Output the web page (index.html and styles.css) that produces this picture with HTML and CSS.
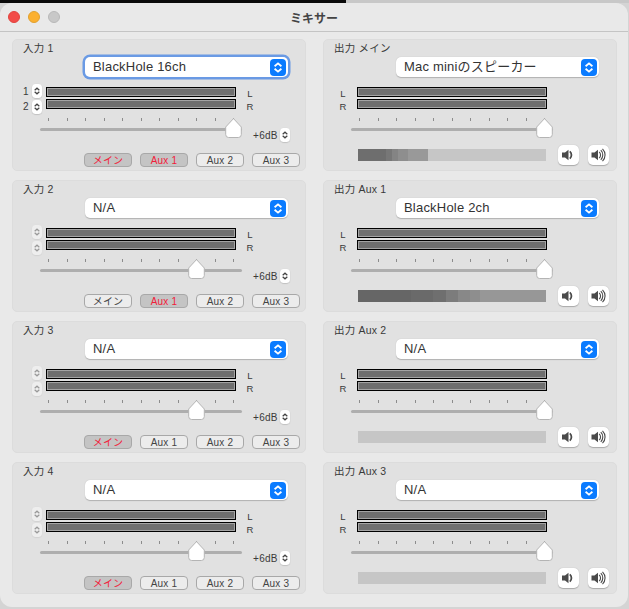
FILE: index.html
```html
<!DOCTYPE html>
<html lang="ja">
<head>
<meta charset="utf-8">
<title>ミキサー</title>
<link rel="stylesheet" href="styles.css">
</head>
<body>
<svg class="defs" width="0" height="0" aria-hidden="true">
  <symbol id="updown" viewBox="0 0 12 14"><path d="M3.2 6 6 3.6 8.800 6M3.200 8 6 10.400 8.800 8" fill="none" stroke="currentColor" stroke-width="1.500"/></symbol>
  <symbol id="thumb" viewBox="0 0 17 20"><path d="M8.500.6 16.300 9V16.500a3 3 0 0 1-3 3H3.700a3 3 0 0 1-3-3V9Z" fill="#fff" stroke="#b4b4b4"/></symbol>
  <symbol id="spk" viewBox="0 0 21 20"><path d="M4 7.500H7L10.500 4.800V15.200L7 12.500H4Z" fill="#4a4a4a"/><path d="M11.800 6.300a5 5 0 0 1 0 7.400" fill="none" stroke="#4a4a4a" stroke-width="1.800"/></symbol>
  <symbol id="spk-loud" viewBox="0 0 21 20"><path d="M3.500 7.500H6.500L10 4.800V15.200L6.500 12.500H3.500Z" fill="#4a4a4a"/><path d="M11.200 6.800a4.500 4.500 0 0 1 0 6.400M12.800 5.200a6.800 6.800 0 0 1 0 9.600M14.500 3.800a8.800 8.800 0 0 1 0 12.400" fill="none" stroke="#4a4a4a" stroke-width="1.100"/></symbol>
</svg>
<div class="screen-strip"></div>
<main class="window">
  <header class="titlebar">
    <div class="lights"><span class="light red"></span><span class="light amber"></span><span class="light off"></span></div>
    <h1 class="title">ミキサー</h1>
  </header>
  <div class="grid">

    <section class="panel">
      <div class="label">入力 1</div>
      <div class="select focus"><span class="select-text">BlackHole 16ch</span><span class="select-btn"><svg width="17" height="17"><use href="#updown"/></svg></span></div>
      <div class="meters">
        <div class="nums"><span>1</span><span>2</span></div>
        <div class="steppers"><span class="stepper"><svg width="10" height="14"><use href="#updown"/></svg></span><span class="stepper"><svg width="10" height="14"><use href="#updown"/></svg></span></div>
        <div class="bars"><div class="meter"></div><div class="meter"></div></div>
        <div class="lr"><span>L</span><span>R</span></div>
      </div>
      <div class="fader-row">
        <div class="fader"><div class="ticks"><i></i><i></i><i></i><i></i><i></i><i></i><i></i><i></i><i></i><i></i><i></i></div><div class="track"></div><svg class="thumb" style="left:185px" width="17" height="20"><use href="#thumb"/></svg></div>
        <span class="db">+6dB</span><span class="stepper db-step"><svg width="10" height="14"><use href="#updown"/></svg></span>
      </div>
      <div class="routes"><span class="route on">メイン</span><span class="route on">Aux 1</span><span class="route">Aux 2</span><span class="route">Aux 3</span></div>
    </section>

    <section class="panel">
      <div class="label">出力 メイン</div>
      <div class="select"><span class="select-text">Mac miniのスピーカー</span><span class="select-btn"><svg width="17" height="17"><use href="#updown"/></svg></span></div>
      <div class="meters out">
        <div class="lr"><span>L</span><span>R</span></div>
        <div class="bars"><div class="meter"></div><div class="meter"></div></div>
      </div>
      <div class="fader-row">
        <div class="fader"><div class="ticks"><i></i><i></i><i></i><i></i><i></i><i></i><i></i><i></i><i></i><i></i><i></i></div><div class="track"></div><svg class="thumb" style="left:185px" width="17" height="20"><use href="#thumb"/></svg></div>
      </div>
      <div class="volume"><div class="level level-main"></div><span class="vol-btn"><svg width="21" height="20"><use href="#spk"/></svg></span><span class="vol-btn"><svg width="21" height="20"><use href="#spk-loud"/></svg></span></div>
    </section>

    <section class="panel">
      <div class="label">入力 2</div>
      <div class="select"><span class="select-text">N/A</span><span class="select-btn"><svg width="17" height="17"><use href="#updown"/></svg></span></div>
      <div class="meters">
        <div class="nums"></div>
        <div class="steppers dim"><span class="stepper"><svg width="10" height="14"><use href="#updown"/></svg></span><span class="stepper"><svg width="10" height="14"><use href="#updown"/></svg></span></div>
        <div class="bars"><div class="meter"></div><div class="meter"></div></div>
        <div class="lr"><span>L</span><span>R</span></div>
      </div>
      <div class="fader-row">
        <div class="fader"><div class="ticks"><i></i><i></i><i></i><i></i><i></i><i></i><i></i><i></i><i></i><i></i><i></i></div><div class="track"></div><svg class="thumb" style="left:148px" width="17" height="20"><use href="#thumb"/></svg></div>
        <span class="db">+6dB</span><span class="stepper db-step"><svg width="10" height="14"><use href="#updown"/></svg></span>
      </div>
      <div class="routes"><span class="route">メイン</span><span class="route on">Aux 1</span><span class="route">Aux 2</span><span class="route">Aux 3</span></div>
    </section>

    <section class="panel">
      <div class="label">出力 Aux 1</div>
      <div class="select"><span class="select-text">BlackHole 2ch</span><span class="select-btn"><svg width="17" height="17"><use href="#updown"/></svg></span></div>
      <div class="meters out">
        <div class="lr"><span>L</span><span>R</span></div>
        <div class="bars"><div class="meter"></div><div class="meter"></div></div>
      </div>
      <div class="fader-row">
        <div class="fader"><div class="ticks"><i></i><i></i><i></i><i></i><i></i><i></i><i></i><i></i><i></i><i></i><i></i></div><div class="track"></div><svg class="thumb" style="left:185px" width="17" height="20"><use href="#thumb"/></svg></div>
      </div>
      <div class="volume"><div class="level level-aux"></div><span class="vol-btn"><svg width="21" height="20"><use href="#spk"/></svg></span><span class="vol-btn"><svg width="21" height="20"><use href="#spk-loud"/></svg></span></div>
    </section>

    <section class="panel">
      <div class="label">入力 3</div>
      <div class="select"><span class="select-text">N/A</span><span class="select-btn"><svg width="17" height="17"><use href="#updown"/></svg></span></div>
      <div class="meters">
        <div class="nums"></div>
        <div class="steppers dim"><span class="stepper"><svg width="10" height="14"><use href="#updown"/></svg></span><span class="stepper"><svg width="10" height="14"><use href="#updown"/></svg></span></div>
        <div class="bars"><div class="meter"></div><div class="meter"></div></div>
        <div class="lr"><span>L</span><span>R</span></div>
      </div>
      <div class="fader-row">
        <div class="fader"><div class="ticks"><i></i><i></i><i></i><i></i><i></i><i></i><i></i><i></i><i></i><i></i><i></i></div><div class="track"></div><svg class="thumb" style="left:148px" width="17" height="20"><use href="#thumb"/></svg></div>
        <span class="db">+6dB</span><span class="stepper db-step"><svg width="10" height="14"><use href="#updown"/></svg></span>
      </div>
      <div class="routes"><span class="route on">メイン</span><span class="route">Aux 1</span><span class="route">Aux 2</span><span class="route">Aux 3</span></div>
    </section>

    <section class="panel">
      <div class="label">出力 Aux 2</div>
      <div class="select"><span class="select-text">N/A</span><span class="select-btn"><svg width="17" height="17"><use href="#updown"/></svg></span></div>
      <div class="meters out">
        <div class="lr"><span>L</span><span>R</span></div>
        <div class="bars"><div class="meter"></div><div class="meter"></div></div>
      </div>
      <div class="fader-row">
        <div class="fader"><div class="ticks"><i></i><i></i><i></i><i></i><i></i><i></i><i></i><i></i><i></i><i></i><i></i></div><div class="track"></div><svg class="thumb" style="left:185px" width="17" height="20"><use href="#thumb"/></svg></div>
      </div>
      <div class="volume"><div class="level"></div><span class="vol-btn"><svg width="21" height="20"><use href="#spk"/></svg></span><span class="vol-btn"><svg width="21" height="20"><use href="#spk-loud"/></svg></span></div>
    </section>

    <section class="panel">
      <div class="label">入力 4</div>
      <div class="select"><span class="select-text">N/A</span><span class="select-btn"><svg width="17" height="17"><use href="#updown"/></svg></span></div>
      <div class="meters">
        <div class="nums"></div>
        <div class="steppers dim"><span class="stepper"><svg width="10" height="14"><use href="#updown"/></svg></span><span class="stepper"><svg width="10" height="14"><use href="#updown"/></svg></span></div>
        <div class="bars"><div class="meter"></div><div class="meter"></div></div>
        <div class="lr"><span>L</span><span>R</span></div>
      </div>
      <div class="fader-row">
        <div class="fader"><div class="ticks"><i></i><i></i><i></i><i></i><i></i><i></i><i></i><i></i><i></i><i></i><i></i></div><div class="track"></div><svg class="thumb" style="left:148px" width="17" height="20"><use href="#thumb"/></svg></div>
        <span class="db">+6dB</span><span class="stepper db-step"><svg width="10" height="14"><use href="#updown"/></svg></span>
      </div>
      <div class="routes"><span class="route on">メイン</span><span class="route">Aux 1</span><span class="route">Aux 2</span><span class="route">Aux 3</span></div>
    </section>

    <section class="panel">
      <div class="label">出力 Aux 3</div>
      <div class="select"><span class="select-text">N/A</span><span class="select-btn"><svg width="17" height="17"><use href="#updown"/></svg></span></div>
      <div class="meters out">
        <div class="lr"><span>L</span><span>R</span></div>
        <div class="bars"><div class="meter"></div><div class="meter"></div></div>
      </div>
      <div class="fader-row">
        <div class="fader"><div class="ticks"><i></i><i></i><i></i><i></i><i></i><i></i><i></i><i></i><i></i><i></i><i></i></div><div class="track"></div><svg class="thumb" style="left:185px" width="17" height="20"><use href="#thumb"/></svg></div>
      </div>
      <div class="volume"><div class="level"></div><span class="vol-btn"><svg width="21" height="20"><use href="#spk"/></svg></span><span class="vol-btn"><svg width="21" height="20"><use href="#spk-loud"/></svg></span></div>
    </section>

  </div>
</main>
</body>
</html>
```
FILE: styles.css
```css
* { box-sizing: border-box; }
html, body { margin: 0; height: 609px; overflow: hidden; }
body {
  background: #d4d4d4;
  font-family: "Liberation Sans", "Noto Sans CJK JP", sans-serif;
  color: #333;
}
.defs { position: absolute; }
.screen-strip { height: 3px; background: linear-gradient(90deg, #0a0a0a 346px, #c8c8c8 346px); }
.window {
  height: 604px;
  width: 628px;
  background: #e9e9e9;
  border-radius: 12px;
  overflow: hidden;
}
.titlebar {
  height: 29px;
  border-bottom: 1px solid #c4c4c4;
  position: relative;
  display: flex;
  align-items: center;
  justify-content: center;
}
.lights { position: absolute; left: 8px; top: 8px; display: flex; gap: 8px; }
.light { width: 12px; height: 12px; border-radius: 50%; }
.red { background: #f24c49; border: 1px solid #e0443e; }
.amber { background: #fbb030; border: 1px solid #e0a030; }
.off { background: #c8c8c8; border: 1px solid #b8b8b8; }
.title { margin: 0; font-size: 12px; font-weight: 700; color: #444; }
.grid {
  display: grid;
  grid-template-columns: 294px 294px;
  grid-auto-rows: 132px;
  column-gap: 17px;
  row-gap: 9px;
  padding: 7px 0 0 12px;
}
.panel {
  background: #e1e1e1;
  border: 1px solid #dcdcdc;
  border-radius: 5px;
  padding-left: 10px;
}
.label { height: 17px; font-size: 10.500px; line-height: 17px; letter-spacing: .2px; color: #3a3a3a; }
.select {
  margin-left: 62px;
  width: 203px;
  height: 20px;
  background: #fff;
  border-radius: 5px;
  display: flex;
  align-items: center;
  justify-content: space-between;
  padding: 0 2px 0 8px;
  box-shadow: 0 .5px 1px rgba(0, 0, 0, .22);
  font-size: 13px;
  letter-spacing: .2px;
  line-height: 18px;
  color: #333;
}
.select-text { margin-top: -1px; }
.select.focus { box-shadow: 0 0 0 2.500px #6a9ae4; }
.select-btn {
  width: 16px;
  height: 17px;
  border-radius: 4px;
  background: #0a7bff;
  color: #fff;
  display: flex;
}
.meters { display: flex; margin-top: 7px; height: 30px; }
.nums { width: 9px; display: flex; flex-direction: column; padding-top: 1px; font-size: 10px; line-height: 14px; gap: 1px; color: #3a3a3a; }
.steppers { width: 10px; display: flex; flex-direction: column; gap: 2px; }
.dim { opacity: .45; }
.stepper {
  display: block;
  width: 10px;
  height: 14px;
  background: #fff;
  border-radius: 3.500px;
  box-shadow: 0 .5px 1px rgba(0, 0, 0, .25);
  color: #444;
}
.stepper svg { display: block; }
.bars {
  width: 190px;
  margin: 3px 0 0 4px;
  display: flex;
  flex-direction: column;
  gap: 2px;
}
.meter {
  height: 10px;
  border: 1px solid #000;
  background: #6f6f6f;
  box-shadow: inset 0 0 0 1px #a4a4a4;
}
.lr {
  width: 6px;
  margin-left: 11px;
  display: flex;
  flex-direction: column;
  align-items: center;
  padding-top: 3px;
  font-size: 9.500px;
  line-height: 13px;
  color: #3a3a3a;
}
.out { margin-left: 6px; }
.out .lr { margin: 0 11px 0 0; }
.out .bars { margin-left: 0; }
.fader-row { display: flex; height: 20px; margin-top: 4px; }
.fader { position: relative; width: 202px; margin-left: 17px; }
.ticks { display: flex; justify-content: space-between; padding: 0 8px; height: 3px; }
.ticks i { display: block; width: 1px; height: 3px; background: #8c8c8c; }
.track { height: 3px; margin-top: 7px; border-radius: 2px; background: #aeaeae; }
.thumb { position: absolute; top: 0; }
.db { margin: 10px 0 0 11px; font-size: 10px; line-height: 15px; letter-spacing: .3px; color: #3a3a3a; width: 27px; }
.db-step { margin-top: 10px; }
.routes { display: flex; gap: 8px; margin: 15px 0 0 61px; }
.route {
  width: 48px;
  height: 14px;
  border: 1px solid #a8a8a8;
  border-radius: 4px;
  background: #ececec;
  font-size: 10px;
  line-height: 13px;
  letter-spacing: .2px;
  text-align: center;
  color: #444;
}
.route.on { background: #c4c4c4; color: #f2203a; }
.volume { display: flex; align-items: center; margin: 7px 0 0 24px; height: 20px; gap: 9px; }
.level { width: 188px; height: 12px; background: #c6c6c6; margin-right: 3px; }
.level-main { background: linear-gradient(90deg, #6e6e6e 0 28px, #777 28px 34px, #848484 34px 40px, #8e8e8e 40px 50px, #999 50px 70px, #c6c6c6 70px); }
.level-aux { background: linear-gradient(90deg, #666 0 53px, #6a6a6a 53px 75px, #6f6f6f 75px 88px, #7c7c7c 88px 100px, #888 100px 112px, #8e8e8e 112px 122px, #979797 122px); }
.vol-btn {
  width: 21px;
  height: 20px;
  background: #fff;
  border-radius: 5px;
  box-shadow: 0 .5px 1px rgba(0, 0, 0, .25);
  display: flex;
}
```
